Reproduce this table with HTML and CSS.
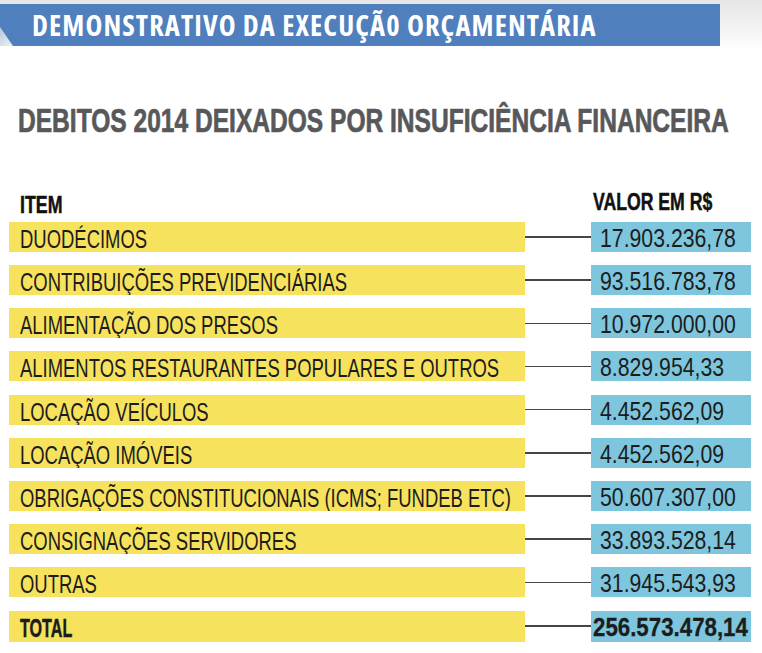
FILE: index.html
```html
<!DOCTYPE html>
<html lang="pt-BR">
<head>
<meta charset="utf-8">
<title>Demonstrativo da Execução Orçamentária</title>
<link rel="stylesheet" href="styles.css">
</head>
<body>
<div class="top">
  <div class="banner"><span class="banner-text">DEMONSTRATIVO DA EXECUÇÃ0 ORÇAMENTÁRIA</span><span class="fold"></span></div>
</div>
<h1 class="title"><span class="sx">DEBITOS 2014 DEIXADOS POR INSUFICIÊNCIA FINANCEIRA</span></h1>
<div class="table">
  <div class="head">
    <div class="head-item"><span class="sx">ITEM</span></div>
    <div class="head-val"><span class="sx">VALOR EM R$</span></div>
  </div>
  <div class="rows">
    <div class="row"><div class="item"><span class="sx">DUODÉCIMOS</span></div><div class="link"></div><div class="val"><span class="sx">17.903.236,78</span></div></div>
    <div class="row"><div class="item"><span class="sx">CONTRIBUIÇÕES PREVIDENCIÁRIAS</span></div><div class="link"></div><div class="val"><span class="sx">93.516.783,78</span></div></div>
    <div class="row"><div class="item"><span class="sx">ALIMENTAÇÃO DOS PRESOS</span></div><div class="link"></div><div class="val"><span class="sx">10.972.000,00</span></div></div>
    <div class="row"><div class="item"><span class="sx">ALIMENTOS RESTAURANTES POPULARES E OUTROS</span></div><div class="link"></div><div class="val"><span class="sx">8.829.954,33</span></div></div>
    <div class="row"><div class="item"><span class="sx">LOCAÇÃO VEÍCULOS</span></div><div class="link"></div><div class="val"><span class="sx">4.452.562,09</span></div></div>
    <div class="row"><div class="item"><span class="sx">LOCAÇÃO IMÓVEIS</span></div><div class="link"></div><div class="val"><span class="sx">4.452.562,09</span></div></div>
    <div class="row"><div class="item"><span class="sx">OBRIGAÇÕES CONSTITUCIONAIS (ICMS; FUNDEB ETC)</span></div><div class="link"></div><div class="val"><span class="sx">50.607.307,00</span></div></div>
    <div class="row"><div class="item"><span class="sx">CONSIGNAÇÕES SERVIDORES</span></div><div class="link"></div><div class="val"><span class="sx">33.893.528,14</span></div></div>
    <div class="row"><div class="item"><span class="sx">OUTRAS</span></div><div class="link"></div><div class="val"><span class="sx">31.945.543,93</span></div></div>
    <div class="row total"><div class="item"><span class="sx">TOTAL</span></div><div class="link"></div><div class="val"><span class="sx">256.573.478,14</span></div></div>
  </div>
</div>
</body>
</html>
```
FILE: styles.css
```css
html, body {
  margin: 0;
  padding: 0;
  background: #ffffff;
  overflow: hidden;
}
body {
  font-family: "Liberation Sans", Arial, sans-serif;
  color: #1c1c1c;
  width: 762px;
  height: 653px;
}
.sx {
  display: inline-block;
  transform-origin: left center;
  white-space: nowrap;
}
.top {
  padding-top: 4px;
  height: 50px;
  box-sizing: border-box;
  background: linear-gradient(to bottom, #e6e6e6 0%, #f4f4f4 60%, #ffffff 100%);
}
.banner {
  position: relative;
  width: 720px;
  height: 42px;
  background: #4f80bd;
  display: flex;
  align-items: center;
  padding-left: 32px;
  box-sizing: border-box;
}
.banner-text {
  font-family: "Open Sans", "Liberation Sans", sans-serif;
  font-weight: 700;
  font-size: 28.5px;
  letter-spacing: 1.1px;
  color: #ffffff;
  font-stretch: condensed;
  white-space: nowrap;
}
.fold {
  position: absolute;
  left: 0;
  bottom: 0;
  width: 13px;
  height: 19px;
  background: linear-gradient(135deg, #b7c7dc 0%, #eef1f5 100%);
  clip-path: polygon(0 0, 100% 100%, 0 100%);
}
.title {
  margin: 53.6px 0 0 18px;
  height: 33px;
  font-size: 33px;
  line-height: 33px;
  font-weight: 700;
  color: #58585a;
}
.title .sx {
  transform: scaleX(0.744);
  margin-right: -260px;
  -webkit-text-stroke: 0.7px #58585a;
}
.table {
  margin-left: 9px;
  width: 742px;
}
.head {
  display: flex;
  margin-top: 53px;
  height: 32.3px;
  line-height: 30px;
  font-size: 24px;
  font-weight: 700;
  color: #111;
}
.head .sx {
  -webkit-text-stroke: 0.5px #111;
}
.head-item {
  width: 582px;
  padding-left: 11px;
  box-sizing: border-box;
}
.head-item .sx {
  transform: scaleX(0.74);
}
.head-val {
  margin-top: -3px;
  padding-left: 2px;
  flex: 1;
}
.head-val .sx {
  transform: scaleX(0.735);
  margin-right: -40px;
}
.rows {
  display: flex;
  flex-direction: column;
  gap: 13.2px;
}
.row {
  display: flex;
  height: 30px;
  font-size: 25px;
  line-height: 30px;
}
.total {
  height: 31px;
}
.item {
  width: 516px;
  background: #f6e25c;
  padding: 2px 0 0 11px;
  box-sizing: border-box;
  overflow: hidden;
}
.item .sx {
  transform: scaleX(0.738);
}
.link {
  width: 66px;
  display: flex;
  align-items: center;
}
.link::before {
  content: "";
  display: block;
  width: 100%;
  height: 1.5px;
  background: #454545;
}
.val {
  width: 160px;
  background: #7ec6dd;
  padding: 1px 0 0 9px;
  box-sizing: border-box;
  overflow: hidden;
}
.val .sx {
  transform: scaleX(0.85);
}
.total .item {
  font-weight: 700;
  font-size: 26px;
}
.total .item .sx {
  transform: scaleX(0.62);
  -webkit-text-stroke: 0.5px #1c1c1c;
}
.total .val {
  font-weight: 700;
  font-size: 26px;
  padding-left: 2px;
}
.total .val .sx {
  transform: scaleX(0.857);
  -webkit-text-stroke: 0.3px #1c1c1c;
}
```
